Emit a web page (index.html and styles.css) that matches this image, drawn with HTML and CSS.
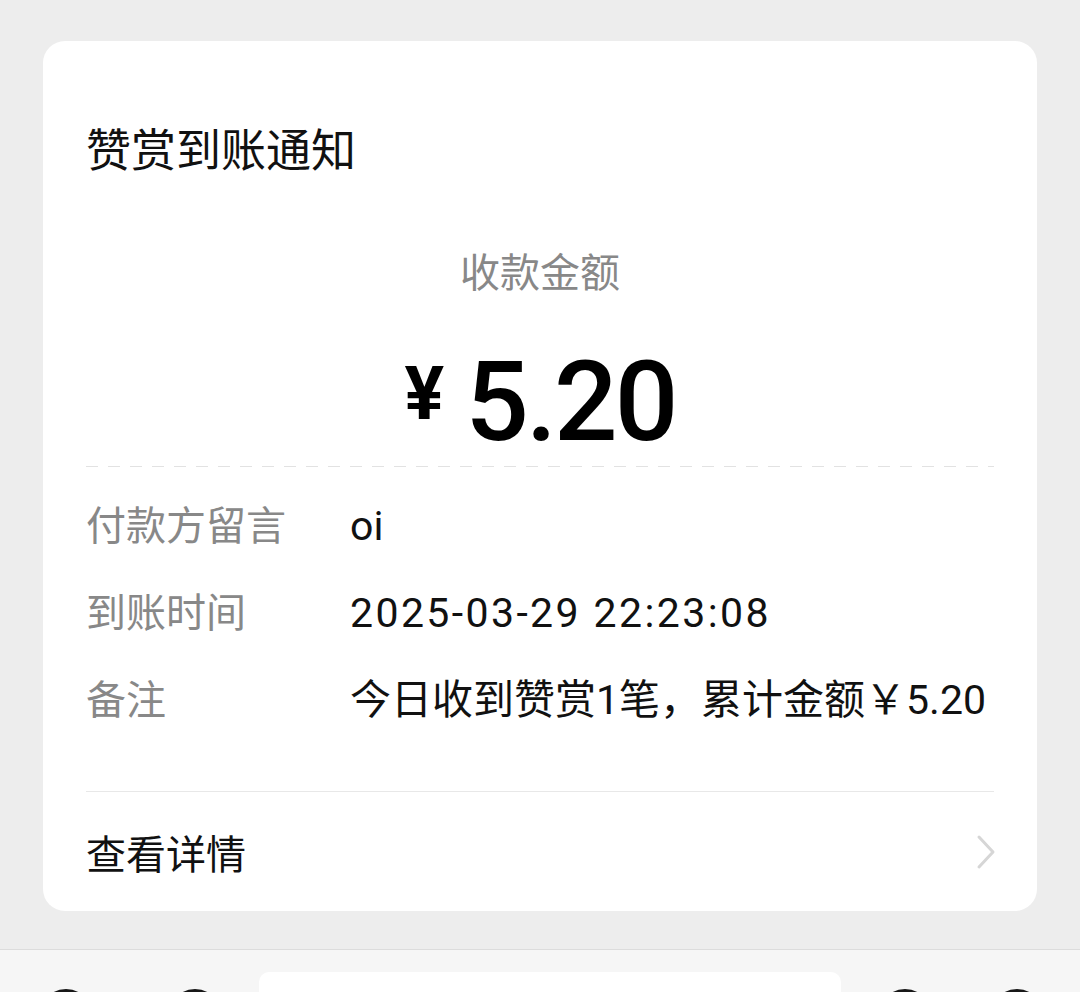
FILE: index.html
```html
<!DOCTYPE html>
<html>
<head>
  <title>赞赏到账通知</title>
  <link rel="stylesheet" href="styles.css">
</head>
<body>
  <div class="page">
    <div class="card">
      <h2 class="card-title">赞赏到账通知</h2>
      <div class="amount-label">收款金额</div>
      <div class="amount">
        <span class="amount-sign">¥</span>
        <span class="amount-value">5.20</span>
      </div>
      <div class="dashed-line"></div>

      <div class="info-list">
        <div class="info-row">
          <div class="info-label">付款方留言</div>
          <div class="info-value">oi</div>
        </div>
        <div class="info-row">
          <div class="info-label">到账时间</div>
          <div class="info-value info-value-time">2025-03-29 22:23:08</div>
        </div>
        <div class="info-row">
          <div class="info-label">备注</div>
          <div class="info-value">今日收到赞赏1笔，累计金额￥5.20</div>
        </div>
      </div>

      <div class="card-footer">
        <span>查看详情</span>
        <svg class="chevron" width="20" height="36" viewBox="0 0 20 36">
          <path d="M3 3 L17 18 L3 33" fill="none" stroke="#d6d6d6" stroke-width="3" stroke-linecap="round" stroke-linejoin="round"/>
        </svg>
      </div>
    </div>
  </div>

  <div class="input-bar">
    <div class="bar-side bar-side-left">
      <div class="bar-icon"></div>
      <div class="bar-icon"></div>
    </div>
    <div class="bar-input"></div>
    <div class="bar-side bar-side-right">
      <div class="bar-icon"></div>
      <div class="bar-icon"></div>
    </div>
  </div>
</body>
</html>
```

FILE: styles.css
```css
html, body {
  margin: 0;
  height: 992px;
  overflow: hidden;
}

body {
  background-color: #ededed;
  font-family: Roboto, "Noto Sans CJK SC", sans-serif;
  color: #111;
}

.page {
  padding: 41px 43px 38px;
}

.card {
  height: 870px;
  box-sizing: border-box;
  background-color: #fff;
  border-radius: 22px;
  padding: 81px 43px 0;
  display: flex;
  flex-direction: column;
}

.card-title {
  margin: 0;
  font-size: 45px;
  font-weight: 400;
  line-height: 60px;
}

.amount-label {
  margin-top: 64px;
  text-align: center;
  font-size: 40px;
  line-height: 56px;
  color: #888;
}

.amount {
  margin-top: 40px;
  display: flex;
  justify-content: center;
  align-items: flex-start;
  gap: 21px;
  height: 120px;
  color: #000;
}

.amount-sign {
  font-size: 74px;
  font-weight: 700;
  line-height: 72px;
  margin-top: 16px;
}

.amount-value {
  font-size: 112px;
  font-weight: 500;
  line-height: 120px;
  letter-spacing: -3px;
}

.dashed-line {
  margin-top: 4px;
  height: 1px;
  background: repeating-linear-gradient(90deg, #e2e2e2 0 12px, transparent 12px 22px);
}

.info-list {
  padding-top: 16px;
}

.info-row {
  display: flex;
  font-size: 40px;
  line-height: 87px;
}

.info-label {
  width: 264px;
  flex-shrink: 0;
  color: #888;
}

.info-value {
  font-size: 41px;
  color: #111;
  white-space: nowrap;
}

.info-value-time {
  letter-spacing: 2.4px;
}

.card-footer {
  margin-top: 47px;
  border-top: 1px solid #e8e8e8;
  flex: 1;
  display: flex;
  align-items: center;
  justify-content: space-between;
  font-size: 40px;
}

.chevron {
  margin-right: -2px;
}

.input-bar {
  border-top: 1px solid #dcdcdc;
  background-color: #f6f6f6;
  height: 60px;
  display: flex;
  align-items: flex-start;
  padding-top: 22px;
  box-sizing: border-box;
}

.bar-side {
  display: flex;
  padding-top: 17px;
  box-sizing: border-box;
}

.bar-side-left {
  width: 259px;
  padding-left: 40px;
  gap: 77px;
}

.bar-side-right {
  flex: 1;
  padding-left: 38px;
  gap: 60px;
}

.bar-input {
  width: 582px;
  flex-shrink: 0;
  height: 60px;
  background-color: #fff;
  border-radius: 10px;
}

.bar-icon {
  width: 52px;
  height: 52px;
  flex-shrink: 0;
  box-sizing: border-box;
  border: 3px solid #181818;
  border-radius: 50%;
}
```
